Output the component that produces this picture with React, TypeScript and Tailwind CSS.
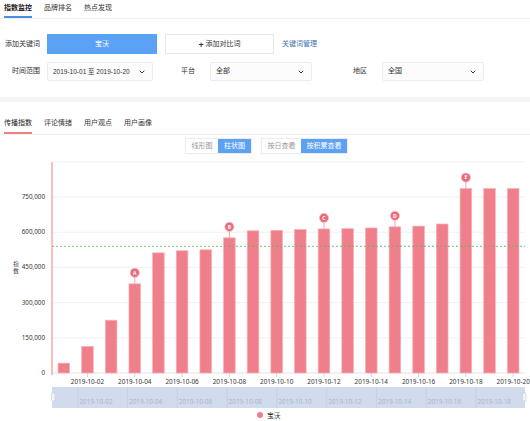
import { ChevronDown } from 'lucide-react';

const FONT = { fontFamily: '"Noto Sans", "Noto Sans CJK SC", sans-serif' };
const NUM_FONT = { fontFamily: '"Liberation Sans", "Noto Sans CJK SC", sans-serif' };

const values = [
  42000, 113000, 225000, 380000, 512000, 521000, 525000, 576000, 606000, 608000,
  611000, 614000, 615000, 618000, 623000, 626000, 635000, 786000, 786000, 786000,
];

const markers: Record<number, string> = { 3: 'A', 7: 'B', 11: 'C', 14: 'D', 17: 'E' };

// chart geometry (page coordinates, svg viewBox starts at y=158)
const X0 = 52;
const X1 = 525;
const Y0 = 373;
const STEP = 35.2; // px per 150,000
const slot = (X1 - X0) / values.length;
const yOf = (v: number) => Y0 - (v / 150000) * STEP;

function Select({ text, width, small }: { text: string; width: string; small?: boolean }) {
  return (
    <div
      className={`${width} h-[19px] flex items-center justify-between pl-[5px] pr-[6px] bg-[#fcfcfc] border border-[#ececec] rounded-[2px] text-[#333]`}
    >
      <span className={small ? 'text-[6.5px] whitespace-nowrap' : ''} style={small ? NUM_FONT : undefined}>
        {text}
      </span>
      <ChevronDown size={8} strokeWidth={3} className="text-[#333] shrink-0" />
    </div>
  );
}

function Chart() {
  const ticks = [0, 1, 2, 3, 4, 5, 6];
  const labels = ['0', '150,000', '300,000', '450,000', '600,000', '750,000'];
  const zoomLabels = ['02', '04', '06', '08', '10', '12', '14', '16', '18'];

  return (
    <svg width={530} height={263} viewBox="0 158 530 263" className="block" style={FONT}>
      {/* grid */}
      {ticks.map((t) => (
        <line key={t} x1={X0} x2={X1} y1={Y0 - t * STEP} y2={Y0 - t * STEP} stroke={t === 0 ? '#e3e3e3' : '#f1f1f1'} strokeWidth={1} />
      ))}
      {labels.map((l, i) => (
        <text key={l} x={45} y={Y0 - i * STEP + 2} fontSize={6.3} fill="#333" textAnchor="end">
          {l}
        </text>
      ))}
      <text x={16} y={266} fontSize={5.5} fill="#333" textAnchor="middle">指</text>
      <text x={16} y={273} fontSize={5.5} fill="#333" textAnchor="middle">数</text>

      {/* bars */}
      {values.map((v, i) => {
        const cx = X0 + slot * (i + 0.5);
        const top = yOf(v);
        return (
          <rect key={i} x={cx - 5.8} y={top} width={11.6} height={Y0 - top} fill="#ef808b" stroke="#f6b0b8" strokeWidth={0.7} />
        );
      })}

      {/* average line */}
      <line x1={X0} x2={X1} y1={246.3} y2={246.3} stroke="#5cb85c" strokeWidth={0.9} strokeDasharray="2 2" />

      {/* markers */}
      {Object.entries(markers).map(([k, letter]) => {
        const i = Number(k);
        const cx = X0 + slot * (i + 0.5);
        const top = yOf(values[i]);
        const cy = top - 11;
        return (
          <g key={k}>
            <line x1={cx} x2={cx} y1={cy + 4} y2={top} stroke="#f3a3ad" strokeWidth={1} />
            <circle cx={cx} cy={cy} r={4.6} fill="#ea6a7b" stroke="#f7c2c8" strokeWidth={0.8} />
            <text x={cx} y={cy + 1.9} fontSize={5} fontWeight={700} fill="#fff" textAnchor="middle">
              {letter}
            </text>
          </g>
        );
      })}

      {/* left axis */}
      <line x1={X0} x2={X0} y1={162} y2={375} stroke="#f37f7f" strokeWidth={1} />

      {/* x axis */}
      {values.map((_, i) =>
        i % 2 === 1 ? (
          <g key={i}>
            <line x1={X0 + slot * (i + 0.5)} x2={X0 + slot * (i + 0.5)} y1={Y0} y2={Y0 + 4} stroke="#ccc" strokeWidth={0.8} />
            <text x={X0 + slot * (i + 0.5)} y={384} fontSize={6.4} fill="#333" textAnchor="middle">
              {`2019-10-${String(i + 1).padStart(2, '0')}`}
            </text>
          </g>
        ) : null,
      )}

      {/* data zoom */}
      <rect x={X0} y={387} width={X1 - X0} height={21} fill="#d2daed" />
      {zoomLabels.map((d, i) => {
        const lx = 77.7 + i * 49.8;
        return (
          <g key={d}>
            <line x1={lx} x2={lx} y1={387} y2={408} stroke="#c3cce3" strokeWidth={0.7} />
            <text x={lx + 1.5} y={404} fontSize={6.4} fill="#aab5d2">
              {`2019-10-${d}`}
            </text>
          </g>
        );
      })}
      <rect x={51.5} y={393} width={3.5} height={8} rx={0.8} fill="#f4f4f4" stroke="#bfc5d1" strokeWidth={0.5} />
      <rect x={522.5} y={393} width={3.5} height={8} rx={0.8} fill="#f4f4f4" stroke="#bfc5d1" strokeWidth={0.5} />

      {/* legend */}
      <circle cx={260} cy={415} r={3} fill="#ef808b" />
      <text x={267} y={417.5} fontSize={6.8} fill="#333">宝沃</text>
    </svg>
  );
}

export default function App() {
  return (
    <div className="w-[530px] h-[421px] bg-white overflow-hidden text-[7px] text-[#333]" style={FONT}>
      {/* Top tabs */}
      <nav className="h-[19px] border-b border-[#eef0f3] flex gap-[12px] px-[4px]">
        <span className="h-[18px] flex items-center border-b-2 border-[#4a90e2] font-semibold text-[#222]">指数监控</span>
        <span className="h-[18px] flex items-center border-b-2 border-transparent text-[#333]">品牌排名</span>
        <span className="h-[18px] flex items-center border-b-2 border-transparent text-[#333]">热点发现</span>
      </nav>

      {/* Filters */}
      <section className="h-[78px] pt-[15px]">
        <div className="h-[20px] flex items-center">
          <span className="w-[40px] text-right">添加关键词</span>
          <button className="ml-[7px] w-[110px] h-[20px] bg-[#5ca2f4] text-white">宝沃</button>
          <button className="ml-[8px] w-[109px] h-[20px] bg-white border border-[#e8e8e8] flex items-center justify-center gap-[2px]">
            <span className="font-bold text-[9px] leading-none">+</span>
            <span>添加对比词</span>
          </button>
          <span className="ml-[8px] text-[#3d6fb3]">关键词管理</span>
        </div>
        <div className="mt-[8px] h-[19px] flex items-center">
          <span className="w-[40px] text-right">时间范围</span>
          <div className="ml-[7px]">
            <Select text="2019-10-01 至 2019-10-20" width="w-[106px]" small />
          </div>
          <span className="ml-[28px]">平台</span>
          <div className="ml-[15px]">
            <Select text="全部" width="w-[102px]" />
          </div>
          <span className="ml-[41px]">地区</span>
          <div className="ml-[15px]">
            <Select text="全国" width="w-[102px]" />
          </div>
        </div>
      </section>

      <div className="h-[5px] bg-[#f2f3f5]" />

      {/* Chart tabs */}
      <div className="h-[33px] border-b border-[#eef1f6] flex items-end gap-[12px] px-[4px]">
        <span className="pb-[4px] border-b-2 border-[#f27f7f] text-[#222]">传播指数</span>
        <span className="pb-[4px] border-b-2 border-transparent">评论情绪</span>
        <span className="pb-[4px] border-b-2 border-transparent">用户观点</span>
        <span className="pb-[4px] border-b-2 border-transparent">用户画像</span>
      </div>

      {/* Toggles */}
      <div className="h-[23px] pt-[3px] flex justify-center gap-[9px] pl-[3px]">
        <div className="h-[16px] flex border border-[#ededed] shadow-[0_0_1px_rgba(0,0,0,0.06)]">
          <span className="w-[32px] flex items-center justify-center text-[#999] bg-white">线形图</span>
          <span className="w-[33px] flex items-center justify-center text-white bg-[#5ca2f4]">柱状图</span>
        </div>
        <div className="h-[16px] flex border border-[#ededed] shadow-[0_0_1px_rgba(0,0,0,0.06)]">
          <span className="w-[39px] flex items-center justify-center text-[#999] bg-white">按日查看</span>
          <span className="w-[46px] flex items-center justify-center text-white bg-[#5ca2f4]">按积累查看</span>
        </div>
      </div>

      <Chart />
    </div>
  );
}
